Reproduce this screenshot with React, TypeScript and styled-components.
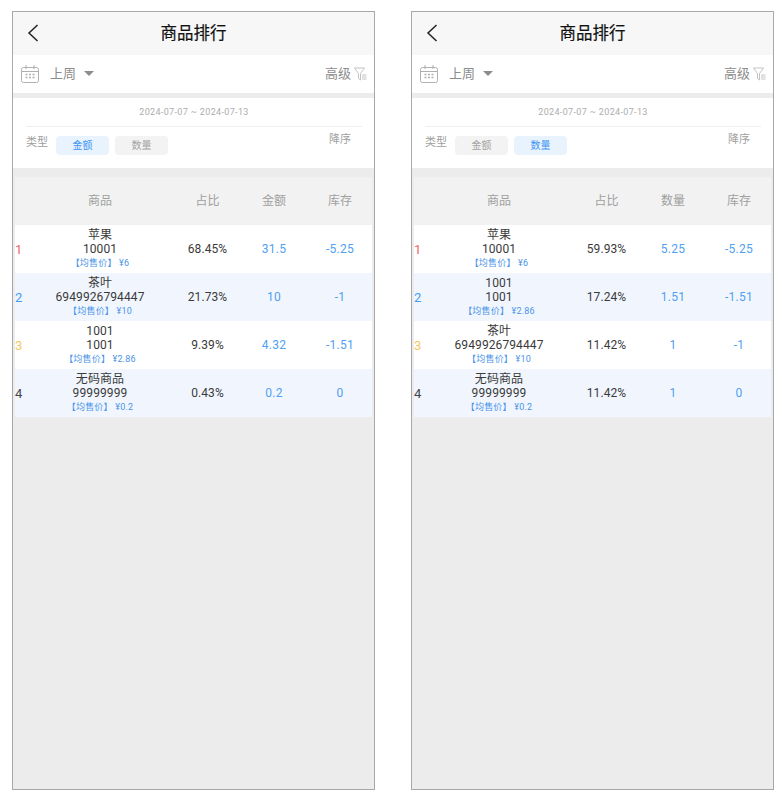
import React from 'react';
import styled, { createGlobalStyle } from 'styled-components';

const GlobalStyle = createGlobalStyle`
  html, body {
    margin: 0;
    padding: 0;
    background: #fff;
    font-family: Roboto, "Noto Sans CJK SC", sans-serif;
  }
`;

const Page = styled.div`
  display: flex;
  gap: 36px;
  padding: 11px 0 0 12px;
`;

const Phone = styled.div`
  width: 363px;
  height: 779px;
  box-sizing: border-box;
  border: 1px solid #a8a8a8;
  background: #ececec;
  display: flex;
  flex-direction: column;
`;

const NavBar = styled.div`
  height: 43px;
  flex: none;
  box-sizing: border-box;
  padding-bottom: 4px;
  background: #f7f7f7;
  display: flex;
  align-items: center;
  justify-content: center;
  position: relative;
`;

const BackButton = styled.svg`
  position: absolute;
  left: 13px;
  top: 11px;
`;

const Title = styled.div`
  font-size: 16.5px;
  font-weight: 400;
  -webkit-text-stroke: 0.2px #111;
  color: #111;
`;

const FilterBar = styled.div`
  height: 38px;
  flex: none;
  background: #fff;
  display: flex;
  align-items: center;
  padding: 0 7px;
  margin-bottom: 5px;
`;

const RangeLabel = styled.span`
  font-size: 13px;
  color: #8c8c8c;
  margin: 0 0 4px 10px;
`;

const Caret = styled.span`
  width: 0;
  height: 0;
  margin: 0 0 2px 8px;
  border-left: 5px solid transparent;
  border-right: 5px solid transparent;
  border-top: 5px solid #8c8c8c;
`;

const Advanced = styled.span`
  margin: 0 3px 4px auto;
  font-size: 13px;
  color: #8c8c8c;
`;

const OptionsCard = styled.div`
  height: 70px;
  flex: none;
  box-sizing: border-box;
  background: #fff;
  padding: 0 12px 0 13px;
  margin-bottom: 9px;
`;

const DateRange = styled.div`
  height: 28px;
  line-height: 28px;
  font-size: 9px;
  letter-spacing: 0.35px;
  color: #adadad;
  text-align: center;
  border-bottom: 1px solid #efefef;
`;

const TypeRow = styled.div`
  display: flex;
  align-items: flex-start;
  padding-top: 9px;
`;

const FieldLabel = styled.span`
  font-size: 11px;
  line-height: 12px;
  color: #a0a0a0;
  margin: 1px 8px 0 0;
`;

const TypeChip = styled.span<{ $active: boolean }>`
  width: 53px;
  height: 19px;
  border-radius: 4px;
  font-size: 10px;
  line-height: 19px;
  text-align: center;
  background: ${(p) => (p.$active ? '#e8f3fe' : '#f3f3f3')};
  color: ${(p) => (p.$active ? '#3f95f2' : '#a3a3a3')};

  & + & {
    margin-left: 6px;
  }
`;

const SortLabel = styled(FieldLabel)`
  margin: -2px 11px 0 auto;
`;

const Table = styled.div`
  margin: 0 2px;
`;

const gridColumns = '11px 148px 67px 66px 66px';

const HeadRow = styled.div`
  height: 48px;
  box-sizing: border-box;
  padding-bottom: 3px;
  background: #f2f2f2;
  display: grid;
  grid-template-columns: ${gridColumns};
  align-items: center;
  text-align: center;
  font-size: 12px;
  color: #a0a0a0;
`;

const Row = styled.div<{ $odd: boolean }>`
  height: 48px;
  background: ${(p) => (p.$odd ? '#fff' : '#f1f6fe')};
  display: grid;
  grid-template-columns: ${gridColumns};
  align-items: center;
  text-align: center;
  font-size: 12px;
  letter-spacing: 0.1px;
  color: #3a3a3a;
`;

const Rank = styled.span<{ $color: string }>`
  text-align: left;
  font-size: 13px;
  color: ${(p) => p.$color};
`;

const Product = styled.div`
  line-height: 14px;
  white-space: nowrap;
`;

const AvgPrice = styled.div`
  font-size: 9px;
  line-height: 14px;
  letter-spacing: 0.2px;
  color: #4a94e8;
`;

const Metric = styled.span`
  color: #4f9ff2;
  letter-spacing: 0.25px;
`;

const CalendarIcon = () => (
  <svg width="20" height="20" viewBox="0 0 20 20" fill="none" stroke="#b0b0b0" strokeWidth="1">
    <rect x="1.5" y="3.5" width="17" height="15" rx="2" />
    <path d="M1.5 7.5h17M6 1v4M14 1v4" />
    <path d="M5.5 10.5h2M9 10.5h2M12.5 10.5h2M5.5 13.5h2M9 13.5h2M12.5 13.5h2" strokeWidth="1.4" />
  </svg>
);

const FilterIcon = () => (
  <svg width="13" height="14" viewBox="0 0 13 14" fill="none" stroke="#bcbcbc" strokeWidth="0.9">
    <path d="M0.5 1h10L6.5 6.5V13L4.5 11.5v-5z" />
    <path d="M8 8h4.5M8 10h4.5M8 12h4.5" />
  </svg>
);

type RowData = {
  rank: number;
  name: string;
  code: string;
  price: string;
  share: string;
  metric: string;
  stock: string;
};

const rankColors = ['#f2646a', '#3f9bf5', '#f8c564', '#444'];

const amountRows: RowData[] = [
  { rank: 1, name: '苹果', code: '10001', price: '6', share: '68.45%', metric: '31.5', stock: '-5.25' },
  { rank: 2, name: '茶叶', code: '6949926794447', price: '10', share: '21.73%', metric: '10', stock: '-1' },
  { rank: 3, name: '1001', code: '1001', price: '2.86', share: '9.39%', metric: '4.32', stock: '-1.51' },
  { rank: 4, name: '无码商品', code: '99999999', price: '0.2', share: '0.43%', metric: '0.2', stock: '0' },
];

const quantityRows: RowData[] = [
  { rank: 1, name: '苹果', code: '10001', price: '6', share: '59.93%', metric: '5.25', stock: '-5.25' },
  { rank: 2, name: '1001', code: '1001', price: '2.86', share: '17.24%', metric: '1.51', stock: '-1.51' },
  { rank: 3, name: '茶叶', code: '6949926794447', price: '10', share: '11.42%', metric: '1', stock: '-1' },
  { rank: 4, name: '无码商品', code: '99999999', price: '0.2', share: '11.42%', metric: '1', stock: '0' },
];

const RankingScreen: React.FC<{ mode: '金额' | '数量'; rows: RowData[] }> = ({ mode, rows }) => (
  <Phone>
    <NavBar>
      <BackButton width="14" height="20" viewBox="0 0 14 20" fill="none" stroke="#222" strokeWidth="1.5">
        <path d="M11.5 2L3 10l8.5 8" />
      </BackButton>
      <Title>商品排行</Title>
    </NavBar>
    <FilterBar>
      <CalendarIcon />
      <RangeLabel>上周</RangeLabel>
      <Caret />
      <Advanced>高级</Advanced>
      <FilterIcon />
    </FilterBar>
    <OptionsCard>
      <DateRange>2024-07-07 ~ 2024-07-13</DateRange>
      <TypeRow>
        <FieldLabel>类型</FieldLabel>
        <TypeChip $active={mode === '金额'}>金额</TypeChip>
        <TypeChip $active={mode === '数量'}>数量</TypeChip>
        <SortLabel>降序</SortLabel>
      </TypeRow>
    </OptionsCard>
    <Table>
      <HeadRow>
        <span />
        <span>商品</span>
        <span>占比</span>
        <span>{mode}</span>
        <span>库存</span>
      </HeadRow>
      {rows.map((row, i) => (
        <Row key={row.rank} $odd={i % 2 === 0}>
          <Rank $color={rankColors[i]}>{row.rank}</Rank>
          <Product>
            <div>{row.name}</div>
            <div>{row.code}</div>
            <AvgPrice>【均售价】 ¥{row.price}</AvgPrice>
          </Product>
          <span>{row.share}</span>
          <Metric>{row.metric}</Metric>
          <Metric>{row.stock}</Metric>
        </Row>
      ))}
    </Table>
  </Phone>
);

export default function App() {
  return (
    <>
      <GlobalStyle />
      <Page>
        <RankingScreen mode="金额" rows={amountRows} />
        <RankingScreen mode="数量" rows={quantityRows} />
      </Page>
    </>
  );
}
